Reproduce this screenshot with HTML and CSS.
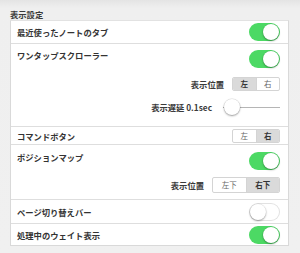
FILE: index.html
```html
<!DOCTYPE html>
<html lang="ja">
<head>
<meta charset="utf-8">
<link rel="stylesheet" href="styles.css">
</head>
<body>
<div class="page">
  <div class="section-title">表示設定</div>
  <div class="panel">
    <div class="row row-recent">
      <span class="label">最近使ったノートのタブ</span>
      <span class="toggle on"><span class="knob"></span></span>
    </div>
    <div class="row row-scroller">
      <div class="main">
        <span class="label">ワンタップスクローラー</span>
        <span class="toggle on"><span class="knob"></span></span>
      </div>
      <div class="sub sub-pos">
        <span class="sublabel">表示位置</span>
        <div class="seg seg-small">
          <span class="seg-item selected">左</span>
          <span class="seg-item">右</span>
        </div>
      </div>
      <div class="sub sub-delay">
        <span class="sublabel">表示遅延 0.1sec</span>
        <div class="slider">
          <div class="track"></div>
          <div class="slider-knob"></div>
        </div>
      </div>
    </div>
    <div class="row row-command">
      <span class="label">コマンドボタン</span>
      <div class="seg seg-small">
        <span class="seg-item">左</span>
        <span class="seg-item selected">右</span>
      </div>
    </div>
    <div class="row row-map">
      <div class="main">
        <span class="label">ポジションマップ</span>
        <span class="toggle on"><span class="knob"></span></span>
      </div>
      <div class="sub sub-mappos">
        <span class="sublabel">表示位置</span>
        <div class="seg seg-wide">
          <span class="seg-item">左下</span>
          <span class="seg-item selected">右下</span>
        </div>
      </div>
    </div>
    <div class="row row-page">
      <span class="label">ページ切り替えバー</span>
      <span class="toggle off"><span class="knob"></span></span>
    </div>
    <div class="row row-wait">
      <span class="label">処理中のウェイト表示</span>
      <span class="toggle on"><span class="knob"></span></span>
    </div>
  </div>
</div>
</body>
</html>
```

FILE: styles.css
```css
html, body {
  margin: 0;
  padding: 0;
}

body {
  width: 300px;
  height: 253px;
  overflow: hidden;
  background: linear-gradient(#e4e4e4 0px, #efefef 8px, #f0f0f0 100%);
  font-family: "Noto Sans CJK JP", "Noto Sans", sans-serif;
  color: #333;
}

.page {
  padding: 0 11px 0 10px;
}

.section-title {
  box-sizing: border-box;
  height: 20px;
  padding-top: 9px;
  font-size: 8.3px;
  line-height: 10px;
  font-weight: 600;
  color: #3a3a3a;
}

.panel {
  background: #fff;
  border: 1px solid #d9d9d9;
  border-top-color: #e2e2e2;
}

.row {
  box-sizing: border-box;
  border-bottom: 1px solid #dedede;
  padding: 0 8px 0 6px;
  font-size: 8.3px;
  line-height: 10px;
}

.row:last-child {
  border-bottom: none;
}

.row-recent,
.row-command,
.row-page,
.row-wait {
  display: flex;
  align-items: center;
  justify-content: space-between;
}

.row-recent { height: 23px; }
.row-command { height: 18px; }
.row-page { height: 24px; }
.row-wait { height: 21px; }

.row-scroller {
  height: 83px;
  padding-top: 6px;
}

.row-map {
  height: 55px;
  padding-top: 7px;
}

.main {
  display: flex;
  align-items: flex-start;
  justify-content: space-between;
}

.label {
  font-weight: 700;
  color: #333;
}

.sub {
  display: flex;
  align-items: center;
  justify-content: flex-end;
}

.sub-pos { margin-top: 9px; }
.sub-delay { margin-top: 8px; height: 16px; }
.sub-mappos { margin-top: 7px; }

.sublabel {
  font-weight: 700;
  color: #3a3a3a;
  margin-right: 8px;
}

.sub-delay .sublabel {
  margin-right: 11px;
}

/* toggle switch */
.toggle {
  position: relative;
  box-sizing: border-box;
  width: 31px;
  height: 18px;
  border-radius: 9px;
  flex: none;
}

.toggle.on {
  background: #4cd964;
}

.toggle.off {
  background: #fff;
  box-shadow: inset 0 0 0 1px #e2e2e2;
}

.toggle .knob {
  position: absolute;
  top: 1px;
  width: 16px;
  height: 16px;
  border-radius: 50%;
  background: #fff;
  box-shadow: 0 1px 2px rgba(0, 0, 0, 0.35), 0 0 0 0.5px rgba(0, 0, 0, 0.08);
}

.toggle.on .knob { right: 1px; }
.toggle.off .knob { left: 1px; }

/* segmented control */
.seg {
  display: flex;
  box-sizing: border-box;
  border: 1px solid #d4d4d4;
  border-radius: 2px;
  overflow: hidden;
  flex: none;
  background: #fff;
}

.seg-small {
  width: 48px;
  height: 14px;
}

.seg-wide {
  width: 68px;
  height: 16px;
}

.seg-item {
  flex: 1;
  display: flex;
  align-items: center;
  justify-content: center;
  font-size: 7.5px;
  color: #666;
  font-weight: 400;
}

.seg-item + .seg-item {
  border-left: 1px solid #d4d4d4;
}

.seg-item.selected {
  background: #dadada;
  color: #333;
  font-weight: 700;
}

/* slider */
.slider {
  position: relative;
  width: 57px;
  height: 16px;
  flex: none;
  display: flex;
  align-items: center;
}

.track {
  width: 100%;
  height: 1px;
  background: #b5b5b5;
}

.slider-knob {
  position: absolute;
  left: 1px;
  top: 0;
  width: 16px;
  height: 16px;
  border-radius: 50%;
  background: #fff;
  box-shadow: 0 1px 2px rgba(0, 0, 0, 0.35), 0 0 0 0.5px rgba(0, 0, 0, 0.12);
}
```
